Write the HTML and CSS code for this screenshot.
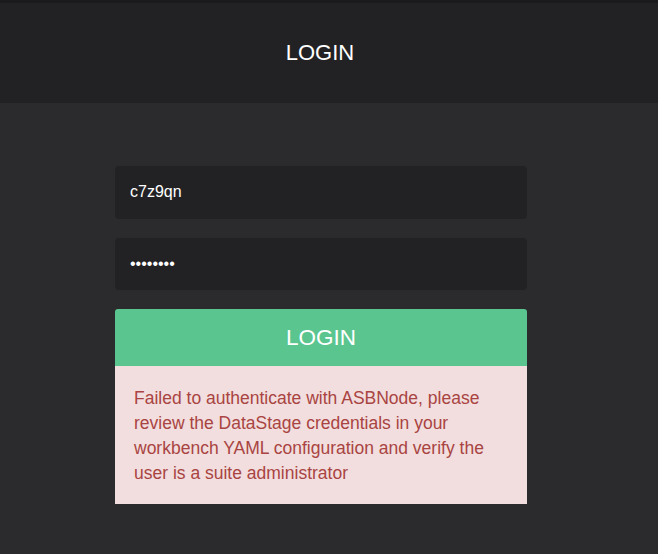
FILE: index.html
```html
<!DOCTYPE html>
<html>
<head>
<meta charset="utf-8">
<link rel="stylesheet" href="styles.css">
</head>
<body>
<div class="topbar"></div>
<header class="header"><h1 class="title">LOGIN</h1></header>
<main class="main">
  <form class="form">
    <input class="field" type="text" value="c7z9qn">
    <input class="field" type="password" value="password">
    <div class="submit-group">
      <button class="btn" type="button">LOGIN</button>
      <div class="alert">Failed to authenticate with ASBNode, please review the DataStage credentials in your workbench YAML configuration and verify the user is a suite administrator</div>
    </div>
  </form>
</main>
</body>
</html>
```
FILE: styles.css
```css
html, body {
  margin: 0;
  padding: 0;
  height: 100%;
}
body {
  background: #2b2b2d;
  font-family: "Liberation Sans", Arial, sans-serif;
  color: #fff;
}
.topbar {
  height: 3px;
  background: #1b1b1d;
}
.header {
  height: 100px;
  background: #222224;
  display: flex;
  align-items: center;
  justify-content: center;
  padding-right: 18px;
}
.title {
  margin: 0;
  font-weight: normal;
  font-size: 22px;
  color: #fff;
}
.main {
  padding-top: 63px;
  padding-left: 115px;
}
.form {
  width: 412px;
  display: flex;
  flex-direction: column;
  gap: 19px;
}
.field {
  box-sizing: border-box;
  height: 52.5px;
  margin: 0;
  border: none;
  border-radius: 4px;
  background: #222224;
  color: #fff;
  font-family: "Liberation Sans", Arial, sans-serif;
  font-size: 16px;
  padding: 0 15px;
  outline: none;
}
.submit-group {
  display: flex;
  flex-direction: column;
}
.btn {
  height: 57px;
  border: none;
  border-radius: 3px 3px 0 0;
  background: #5ac58f;
  color: #fff;
  font-family: "Liberation Sans", Arial, sans-serif;
  font-size: 22.5px;
  padding: 0;
}
.alert {
  background: #f2dede;
  color: #a94442;
  font-size: 17.5px;
  line-height: 25px;
  padding: 20px 18px 18px 19px;
}
```
